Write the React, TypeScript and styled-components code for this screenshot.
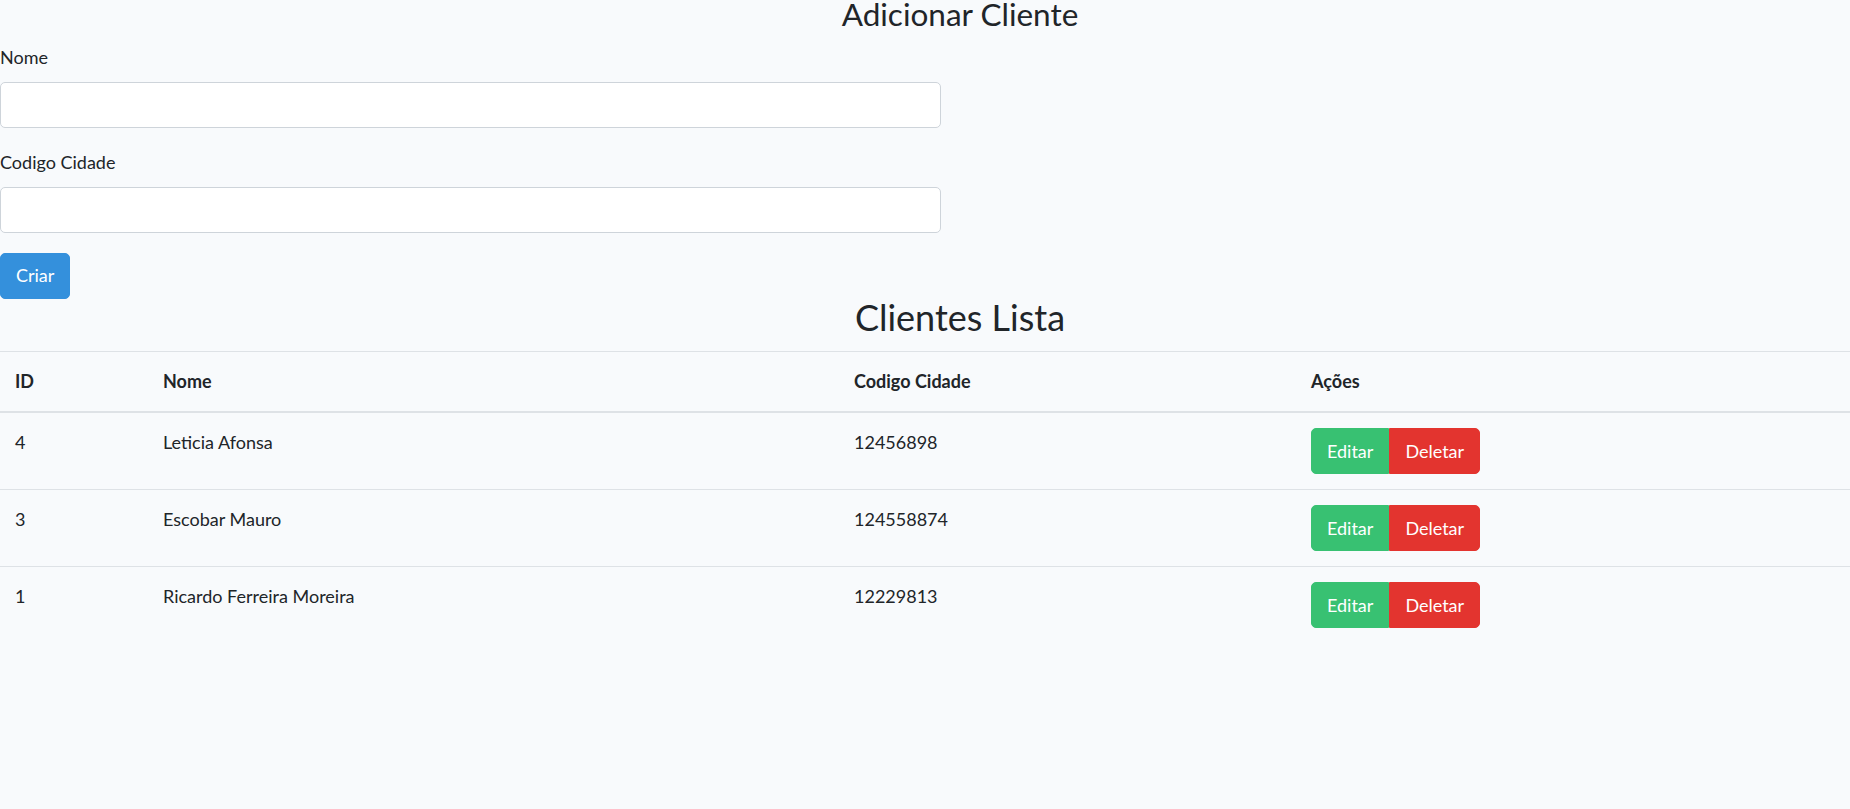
import React from "react";
import styled, { createGlobalStyle } from "styled-components";

const GlobalStyle = createGlobalStyle`
  *, *::before, *::after { box-sizing: border-box; }
  html, body { margin: 0; padding: 0; }
  body {
    background: #f8fafc;
    color: #212529;
    font-family: "Lato", "Noto Sans", "Liberation Sans", sans-serif;
    font-size: 18px;
    line-height: 1.6;
  }
`;

const Page = styled.div`
  display: flex;
  flex-direction: column;
  width: 100%;
`;

const Heading = styled.h1<{ $size: number; $lh: number; $mb: number }>`
  margin: 0 0 ${(p) => p.$mb}px;
  padding-left: 70px;
  text-align: center;
  font-size: ${(p) => p.$size}px;
  line-height: ${(p) => p.$lh}px;
  font-weight: 400;
  color: #212529;
`;

const Form = styled.form`
  display: flex;
  flex-direction: column;
  align-items: flex-start;
`;

const FormGroup = styled.div`
  display: flex;
  flex-direction: column;
  margin-bottom: 20px;
`;

const Label = styled.label`
  display: block;
  margin-bottom: 10px;
  line-height: 28.8px;
`;

const Input = styled.input`
  display: block;
  width: 941px;
  height: 46px;
  padding: 7.5px 15px;
  font: inherit;
  color: #495057;
  background: #fff;
  border: 1px solid #ced4da;
  border-radius: 5px;
  outline: none;
`;

const Button = styled.button<{ $variant: "primary" | "success" | "danger" }>`
  display: inline-flex;
  align-items: center;
  justify-content: center;
  height: 46px;
  padding: 0 15px;
  font: inherit;
  color: #fff;
  border: 1px solid transparent;
  border-radius: 5px;
  cursor: pointer;
  background: ${(p) =>
    p.$variant === "primary" ? "#3490dc" : p.$variant === "success" ? "#38c172" : "#e3342f"};
  border-color: ${(p) =>
    p.$variant === "primary" ? "#3490dc" : p.$variant === "success" ? "#38c172" : "#e3342f"};
`;

const ButtonGroup = styled.div`
  display: inline-flex;
  & > ${Button}:not(:first-child) {
    border-top-left-radius: 0;
    border-bottom-left-radius: 0;
  }
  & > ${Button}:not(:last-child) {
    border-top-right-radius: 0;
    border-bottom-right-radius: 0;
  }
`;

const Table = styled.table`
  width: 100%;
  border-collapse: collapse;
  color: #212529;
`;

const Th = styled.th<{ $w?: number }>`
  width: ${(p) => (p.$w ? `${p.$w}px` : "auto")};
  padding: 15px;
  text-align: left;
  vertical-align: bottom;
  font-weight: 700;
  line-height: 28.8px;
  border-top: 1px solid #dee2e6;
  border-bottom: 2px solid #dee2e6;
`;

const Td = styled.td`
  padding: 15px;
  vertical-align: top;
  line-height: 28.8px;
  border-top: 1px solid #dee2e6;
`;

const clientes = [
  { id: 4, nome: "Leticia Afonsa", codigo: "12456898" },
  { id: 3, nome: "Escobar Mauro", codigo: "124558874" },
  { id: 1, nome: "Ricardo Ferreira Moreira", codigo: "12229813" },
];

export default function App() {
  return (
    <>
      <GlobalStyle />
      <Page>
        <Heading as="h3" $size={31.5} $lh={29} $mb={14}>
          Adicionar Cliente
        </Heading>
        <Form onSubmit={(e) => e.preventDefault()}>
          <FormGroup>
            <Label htmlFor="nome">Nome</Label>
            <Input id="nome" type="text" />
          </FormGroup>
          <FormGroup>
            <Label htmlFor="codigo">Codigo Cidade</Label>
            <Input id="codigo" type="text" />
          </FormGroup>
          <Button type="submit" $variant="primary">
            Criar
          </Button>
        </Form>
        <Heading as="h2" $size={36} $lh={36.6} $mb={16}>
          Clientes Lista
        </Heading>
        <Table>
          <thead>
            <tr>
              <Th $w={148}>ID</Th>
              <Th $w={691}>Nome</Th>
              <Th $w={457}>Codigo Cidade</Th>
              <Th>Ações</Th>
            </tr>
          </thead>
          <tbody>
            {clientes.map((c) => (
              <tr key={c.id}>
                <Td>{c.id}</Td>
                <Td>{c.nome}</Td>
                <Td>{c.codigo}</Td>
                <Td>
                  <ButtonGroup>
                    <Button $variant="success">Editar</Button>
                    <Button $variant="danger">Deletar</Button>
                  </ButtonGroup>
                </Td>
              </tr>
            ))}
          </tbody>
        </Table>
      </Page>
    </>
  );
}
